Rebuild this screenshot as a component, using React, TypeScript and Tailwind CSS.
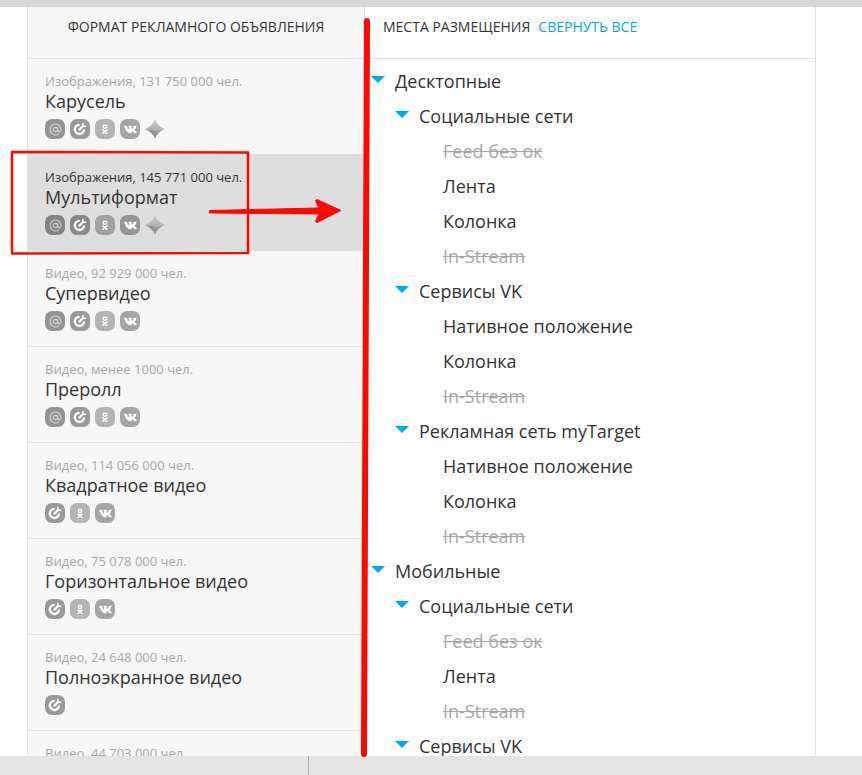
import React, { useState } from "react";
import { AtSign } from "lucide-react";
import { FaVk } from "react-icons/fa";

type Network = "mail" | "target" | "ok" | "vk" | "star";

type Format = {
  name: string;
  info: string;
  networks: Network[];
};

type Place = {
  name: string;
  disabled?: boolean;
  children?: Place[];
};

const formats: Format[] = [
  { name: "Карусель", info: "Изображения, 131 750 000 чел.", networks: ["mail", "target", "ok", "vk", "star"] },
  { name: "Мультиформат", info: "Изображения, 145 771 000 чел.", networks: ["mail", "target", "ok", "vk", "star"] },
  { name: "Супервидео", info: "Видео, 92 929 000 чел.", networks: ["mail", "target", "ok", "vk"] },
  { name: "Преролл", info: "Видео, менее 1000 чел.", networks: ["mail", "target", "ok", "vk"] },
  { name: "Квадратное видео", info: "Видео, 114 056 000 чел.", networks: ["target", "ok", "vk"] },
  { name: "Горизонтальное видео", info: "Видео, 75 078 000 чел.", networks: ["target", "ok", "vk"] },
  { name: "Полноэкранное видео", info: "Видео, 24 648 000 чел.", networks: ["target"] },
  { name: "", info: "Видео, 44 703 000 чел.", networks: [] },
];

const places: Place[] = [
  {
    name: "Десктопные",
    children: [
      {
        name: "Социальные сети",
        children: [
          { name: "Feed без ок", disabled: true },
          { name: "Лента" },
          { name: "Колонка" },
          { name: "In-Stream", disabled: true },
        ],
      },
      {
        name: "Сервисы VK",
        children: [
          { name: "Нативное положение" },
          { name: "Колонка" },
          { name: "In-Stream", disabled: true },
        ],
      },
      {
        name: "Рекламная сеть myTarget",
        children: [
          { name: "Нативное положение" },
          { name: "Колонка" },
          { name: "In-Stream", disabled: true },
        ],
      },
    ],
  },
  {
    name: "Мобильные",
    children: [
      {
        name: "Социальные сети",
        children: [
          { name: "Feed без ок", disabled: true },
          { name: "Лента" },
          { name: "In-Stream", disabled: true },
        ],
      },
      { name: "Сервисы VK", children: [] },
    ],
  },
];

const NetworkIcon = ({ network }: { network: Network }) => {
  if (network === "mail") {
    return (
      <span className="flex size-5 items-center justify-center rounded-[7px] bg-black/40 text-[#cfcfcf]">
        <AtSign size={13} strokeWidth={2} />
      </span>
    );
  }
  if (network === "target") {
    return (
      <span className="flex size-5 items-center justify-center rounded-[7px] bg-black/38 text-white">
        <svg width="20" height="20" viewBox="0 0 20 20" fill="none" stroke="currentColor">
          <path d="M9.600 5.800A4.600 4.600 0 1 0 14 10.400" strokeWidth="2.300" />
          <path d="M9.400 10.600L13 7" strokeWidth="2.200" strokeLinecap="round" />
          <path d="M12.800 3.800V7.200H16.200" strokeWidth="1.500" />
        </svg>
      </span>
    );
  }
  if (network === "ok") {
    return (
      <span className="flex size-5 items-center justify-center rounded-[7px] bg-black/27 text-white">
        <svg width="20" height="20" viewBox="0 0 20 20" fill="none" stroke="currentColor" strokeLinecap="round">
          <circle cx="10" cy="7.800" r="1.700" strokeWidth="1.400" />
          <path d="M7.800 11C9.200 12 10.800 12 12.200 11M10 12L8.200 14.200M10 12L11.800 14.200" strokeWidth="1.500" />
        </svg>
      </span>
    );
  }
  if (network === "vk") {
    return (
      <span className="flex size-5 items-center justify-center rounded-[7px] bg-black/33 text-white">
        <FaVk size={13} stroke="currentColor" strokeWidth={20} />
      </span>
    );
  }
  return (
    <svg width="20" height="20" viewBox="0 0 20 20">
      <defs>
        <linearGradient id="starTop" x1="0" y1="0" x2="0" y2="1">
          <stop offset="0" stopColor="#d0d0d0" />
          <stop offset="1" stopColor="#b0b0b0" />
        </linearGradient>
        <linearGradient id="starBottom" x1="0" y1="0" x2="1" y2="0">
          <stop offset="0.200" stopColor="#858585" />
          <stop offset="0.800" stopColor="#a8a8a8" />
        </linearGradient>
      </defs>
      <path d="M10 0C12 5 15 8 20 10L10 11.500L0 10C5 8 8 5 10 0Z" fill="url(#starTop)" />
      <path d="M0 10L10 11.500L20 10C15 12 12 15 10 20C8 15 5 12 0 10Z" fill="url(#starBottom)" />
    </svg>
  );
};

const PlaceItem = ({ place, collapsed }: { place: Place; collapsed: boolean }) => {
  return (
    <li>
      {place.children ? (
        <button className="flex h-[35px] items-center gap-2.5">
          <svg className="mb-0.5" width="14" height="7" viewBox="0 0 14 7">
            <path d="M0 0H14L7 7Z" fill="#00aaf2" />
          </svg>
          <span>{place.name}</span>
        </button>
      ) : (
        <div className="flex h-[35px] items-center pl-6">
          <span className={place.disabled ? "text-[#a6a6a6] line-through" : ""}>{place.name}</span>
        </div>
      )}
      {place.children && !collapsed && (
        <ul className="pl-6">
          {place.children.map((child) => (
            <PlaceItem key={child.name} place={child} collapsed={collapsed} />
          ))}
        </ul>
      )}
    </li>
  );
};

const App = () => {
  const [selected, setSelected] = useState("Мультиформат");
  const [collapsed, setCollapsed] = useState(false);

  return (
    <div className="relative flex h-screen flex-col overflow-hidden bg-white font-['Open_Sans',sans-serif] text-[#333]">
      <div className="h-[7px] shrink-0 bg-[#d7d7d7]"></div>

      <main className="mr-[46px] ml-[27px] flex min-h-0 flex-1 overflow-hidden border-x border-[#e2e2e2]">
        {/* Formats */}
        <section className="w-[337px] shrink-0 border-r border-[#e2e2e2] bg-[#f7f7f7]">
          <h2 className="h-[52px] border-b border-[#e2e2e2] pt-2.5 text-center text-sm">
            ФОРМАТ РЕКЛАМНОГО ОБЪЯВЛЕНИЯ
          </h2>
          {formats.map((format) => (
            <button
              key={format.info}
              onClick={() => setSelected(format.name)}
              className={
                format.name === selected
                  ? "-mt-px flex h-[97px] w-full flex-col border-b border-[#dedede] bg-[#dedede] px-[17px] pt-[13px] text-left"
                  : "flex h-24 w-full flex-col border-b border-[#e2e2e2] px-[17px] pt-3 text-left"
              }
            >
              <span className={format.name === selected ? "text-[13px] leading-5" : "text-[13px] leading-5 text-[#a6a6a6]"}>
                {format.info}
              </span>
              <span className="text-lg leading-5">{format.name}</span>
              <span className="mt-2 flex gap-[5px]">
                {format.networks.map((network) => (
                  <NetworkIcon key={network} network={network} />
                ))}
              </span>
            </button>
          ))}
        </section>

        {/* Places */}
        <section className="min-w-0 flex-1">
          <div className="flex h-[52px] gap-2 border-b border-[#e2e2e2] pt-2.5 pl-[18px] text-sm">
            <h2>МЕСТА РАЗМЕЩЕНИЯ</h2>
            <button className="self-start text-[#00aaf2]" onClick={() => setCollapsed(!collapsed)}>
              {collapsed ? "РАЗВЕРНУТЬ ВСЕ" : "СВЕРНУТЬ ВСЕ"}
            </button>
          </div>
          <ul className="pt-1 pl-1.5 text-lg">
            {places.map((place) => (
              <PlaceItem key={place.name} place={place} collapsed={collapsed} />
            ))}
          </ul>
        </section>
      </main>

      <div className="flex h-[19px] shrink-0 bg-[#e4e4e4]">
        <div className="w-[309px] border-r border-[#b0b0b0]"></div>
      </div>

      {/* Red marks over the page */}
      <svg
        className="pointer-events-none absolute top-0 left-0"
        width="400"
        height="775"
        viewBox="0 0 400 775"
        fill="none"
        stroke="#ff0800"
        strokeLinecap="round"
        strokeLinejoin="round"
      >
        <path d="M367 21L364 754" strokeWidth="6" />
        <path d="M12 152L248 152.500L248 253L12 253.500Z" strokeWidth="2.500" />
        <path
          d="M210 210.500L319 208L315.500 200.500L317 199.500L341 210.500L317 222.500L315.500 221.500L319 214L210 213Z"
          fill="#ff0800"
          strokeWidth="1"
        />
      </svg>
    </div>
  );
};

export default App;
